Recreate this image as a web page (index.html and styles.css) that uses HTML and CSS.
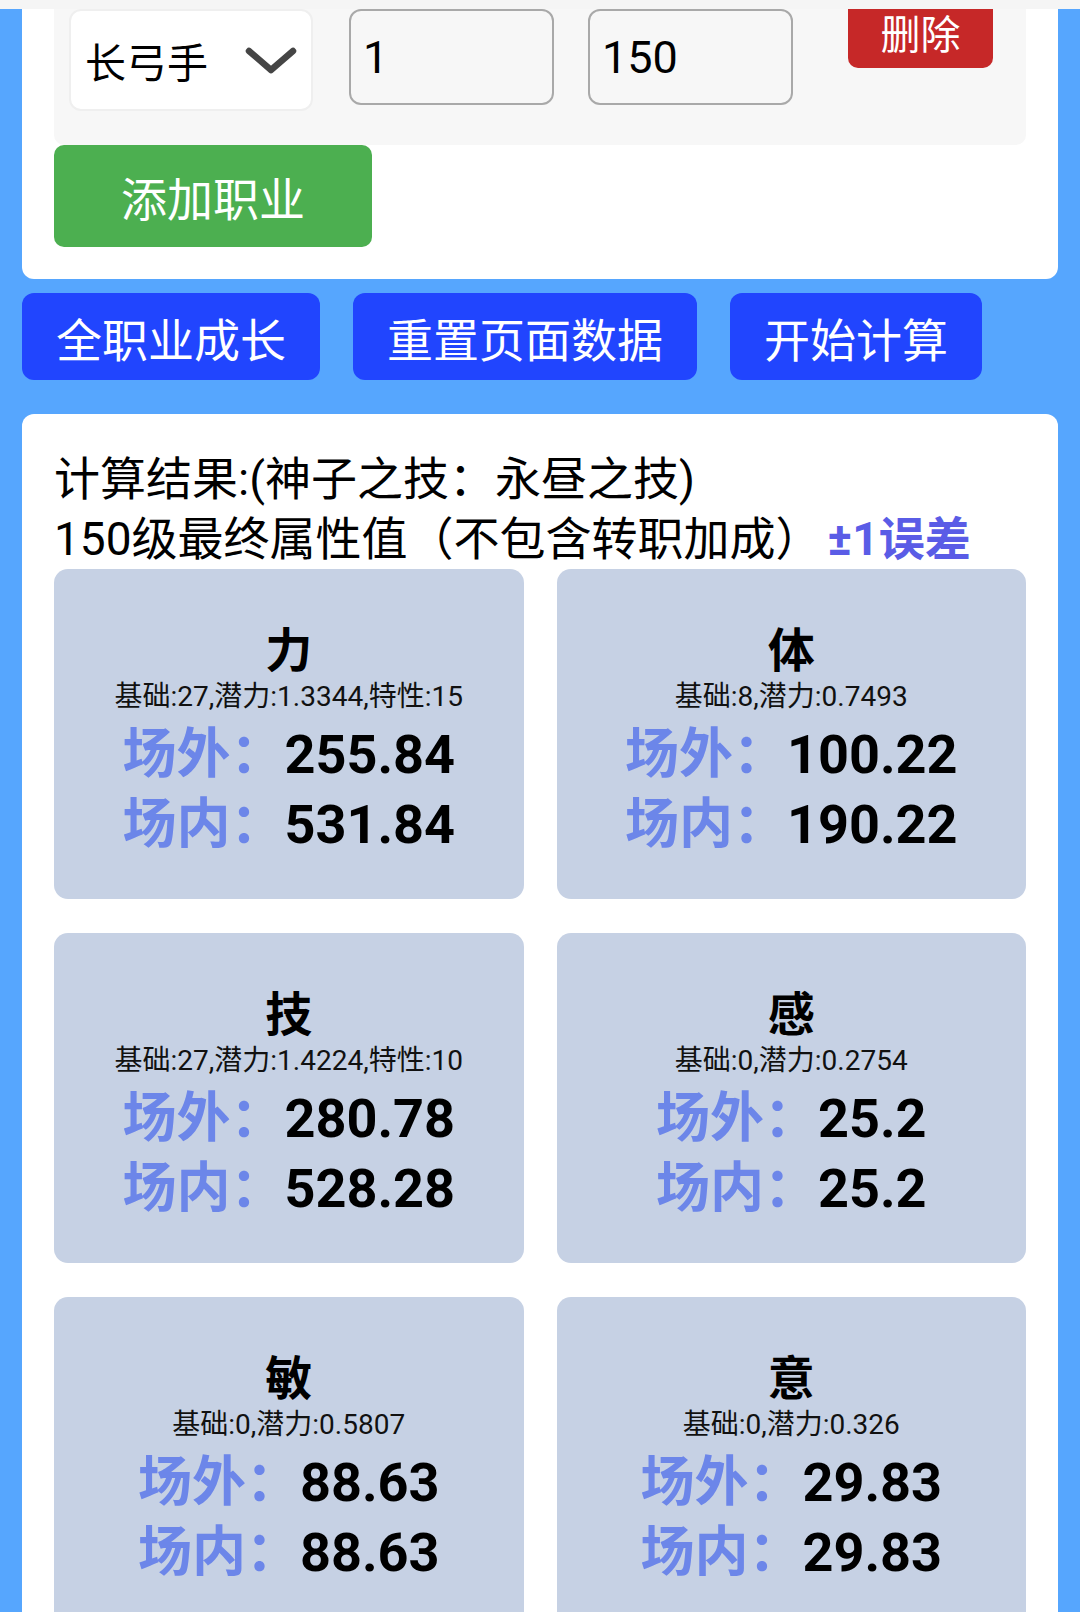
FILE: index.html
```html
<!DOCTYPE html>
<html lang="zh-CN">
<head>
<meta charset="utf-8">
<title>职业成长计算</title>
<link rel="stylesheet" href="styles.css">
</head>
<body>
<div class="topbar"></div>
<main class="page">
  <section class="card job-card">
    <div class="job-row">
      <div class="fake-select">
        <span>长弓手</span>
        <svg class="chevron" width="52" height="30" viewBox="0 0 52 30"><path d="M4 5 L26 24 L48 5" fill="none" stroke="#454545" stroke-width="6.5" stroke-linecap="round" stroke-linejoin="round"/></svg>
      </div>
      <input class="num-input" type="text" value="1">
      <input class="num-input" type="text" value="150">
      <button class="btn-delete">删除</button>
    </div>
    <button class="btn-add">添加职业</button>
  </section>

  <div class="action-row">
    <button class="btn-blue">全职业成长</button>
    <button class="btn-blue">重置页面数据</button>
    <button class="btn-blue">开始计算</button>
  </div>

  <section class="card result-card">
    <p class="result-line">计算结果:(神子之技：永昼之技)</p>
    <p class="result-line">150级最终属性值（不包含转职加成）<span class="err">±1误差</span></p>
    <div class="stat-grid">
      <div class="stat">
        <div class="stat-name">力</div>
        <div class="stat-sub">基础:27,潜力:1.3344,特性:15</div>
        <div class="stat-val"><span class="lbl">场外：</span><span class="num">255.84</span></div>
        <div class="stat-val"><span class="lbl">场内：</span><span class="num">531.84</span></div>
      </div>
      <div class="stat">
        <div class="stat-name">体</div>
        <div class="stat-sub">基础:8,潜力:0.7493</div>
        <div class="stat-val"><span class="lbl">场外：</span><span class="num">100.22</span></div>
        <div class="stat-val"><span class="lbl">场内：</span><span class="num">190.22</span></div>
      </div>
      <div class="stat">
        <div class="stat-name">技</div>
        <div class="stat-sub">基础:27,潜力:1.4224,特性:10</div>
        <div class="stat-val"><span class="lbl">场外：</span><span class="num">280.78</span></div>
        <div class="stat-val"><span class="lbl">场内：</span><span class="num">528.28</span></div>
      </div>
      <div class="stat">
        <div class="stat-name">感</div>
        <div class="stat-sub">基础:0,潜力:0.2754</div>
        <div class="stat-val"><span class="lbl">场外：</span><span class="num">25.2</span></div>
        <div class="stat-val"><span class="lbl">场内：</span><span class="num">25.2</span></div>
      </div>
      <div class="stat">
        <div class="stat-name">敏</div>
        <div class="stat-sub">基础:0,潜力:0.5807</div>
        <div class="stat-val"><span class="lbl">场外：</span><span class="num">88.63</span></div>
        <div class="stat-val"><span class="lbl">场内：</span><span class="num">88.63</span></div>
      </div>
      <div class="stat">
        <div class="stat-name">意</div>
        <div class="stat-sub">基础:0,潜力:0.326</div>
        <div class="stat-val"><span class="lbl">场外：</span><span class="num">29.83</span></div>
        <div class="stat-val"><span class="lbl">场内：</span><span class="num">29.83</span></div>
      </div>
    </div>
  </section>
</main>
</body>
</html>
```

FILE: styles.css
```css
* { box-sizing: border-box; }

body {
  margin: 0;
  background: #56a6fe;
  font-family: "Roboto", "Noto Sans CJK SC", sans-serif;
  color: #000;
}

.topbar {
  position: fixed;
  top: 0;
  left: 0;
  right: 0;
  height: 9px;
  background: #f5f5f5;
  z-index: 10;
}

.page {
  padding: 0 22px 40px;
}

.card {
  background: #fff;
  border-radius: 12px;
  padding: 32px;
}

.job-card {
  margin-top: -50px;
}

.job-row {
  display: flex;
  align-items: flex-start;
  background: #f7f7f7;
  border-radius: 10px;
  padding: 14px 0 34px 15px;
}

.fake-select {
  margin-top: 13px;
  width: 244px;
  height: 102px;
  background: #fff;
  border: 2px solid #efefef;
  border-radius: 12px;
  display: flex;
  align-items: center;
  justify-content: space-between;
  padding: 0 14px 0 14px;
  font-family: "Noto Sans CJK SC", sans-serif;
  font-size: 41px;
}

.chevron {
  display: block;
  margin-top: 2px;
}

.num-input {
  margin-top: 13px;
  margin-left: 36px;
  width: 205px;
  height: 96px;
  border: 2px solid #a9a9a9;
  border-radius: 12px;
  background: transparent;
  padding: 0 12px;
  font-family: "Roboto", sans-serif;
  font-size: 45px;
  color: #000;
  outline: none;
}

.num-input + .num-input {
  margin-left: 34px;
}

.btn-delete {
  margin-left: 55px;
  width: 145px;
  height: 72px;
  border: 0;
  border-radius: 10px;
  background: #c62828;
  color: #fff;
  font-family: "Noto Sans CJK SC", sans-serif;
  font-size: 40px;
  padding: 0;
}

.btn-add {
  display: block;
  width: 318px;
  height: 102px;
  border: 0;
  border-radius: 10px;
  background: #4caf50;
  color: #fff;
  font-family: "Noto Sans CJK SC", sans-serif;
  font-size: 46px;
  padding: 0;
}

.action-row {
  display: flex;
  gap: 33px;
  margin-top: 14px;
}

.btn-blue {
  height: 87px;
  border: 0;
  border-radius: 12px;
  background: #2145fe;
  color: #fff;
  font-family: "Noto Sans CJK SC", sans-serif;
  font-size: 46px;
  padding: 0 34px;
}

.result-card {
  margin-top: 34px;
  padding-top: 35px;
}

.result-line {
  margin: 0;
  height: 60px;
  font-size: 46px;
  line-height: 60px;
  white-space: nowrap;
}

.err {
  color: #5a5ce6;
  font-weight: 700;
  margin-left: 6px;
}

.stat-grid {
  display: grid;
  grid-template-columns: 1fr 1fr;
  gap: 34px 33px;
}

.stat {
  background: #c6d1e4;
  border-radius: 14px;
  padding: 46px 0 44px;
  text-align: center;
}

.stat-name {
  height: 64px;
  font-family: "Noto Sans CJK SC", sans-serif;
  font-weight: 700;
  font-size: 47px;
  line-height: 64px;
}

.stat-sub {
  height: 36px;
  font-size: 28px;
  line-height: 36px;
  color: #111;
}

.stat-val {
  height: 70px;
  font-size: 54px;
  line-height: 70px;
  font-weight: 700;
  white-space: nowrap;
}

.lbl {
  color: #6c86e9;
  font-family: "Noto Sans CJK SC", sans-serif;
}

.num {
  color: #000;
  font-family: "Roboto", sans-serif;
}
```
